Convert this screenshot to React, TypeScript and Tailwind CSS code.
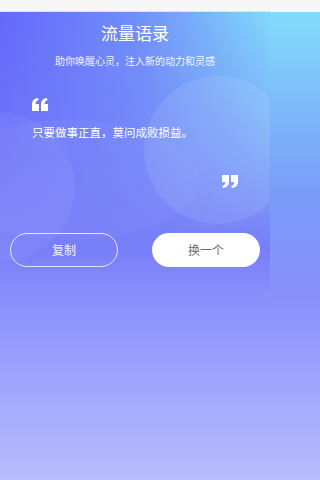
import React from "react";

const QuoteMark = ({ flip = false }: { flip?: boolean }) => (
  <svg
    width="16"
    height="13"
    viewBox="0 0 16 13"
    className={flip ? "rotate-180" : ""}
    fill="white"
  >
    <path d="M0 13 V6.5 C0 2.8 2.2 0.6 6 0 L6.6 2 C4.5 2.6 3.6 3.9 3.6 6 H7 V13 Z" />
    <path d="M9 13 V6.5 C9 2.8 11.2 0.6 15 0 L15.6 2 C13.5 2.6 12.6 3.9 12.6 6 H16 V13 Z" />
  </svg>
);

export default function App() {
  return (
    <div className="w-full h-[480px] bg-[linear-gradient(180deg,#f7f7f7_0px,#f7f7f7_12px,#82dcfb_12px,#7a9cf8_40%,#8a90fb_62%,#b8bcfd_100%)]">
      <div
        className="relative w-[270px] h-[480px] overflow-hidden bg-[linear-gradient(180deg,rgba(122,127,248,0)_0%,rgba(122,127,248,0.5)_30%,#787ef8_52%,#8a90fb_62%,#b8bcfd_100%),linear-gradient(90deg,#6467fb_0%,#6f8ffa_50%,#82dcfb_100%)]"
        style={{ fontFamily: '"Noto Sans CJK SC", "Noto Sans", sans-serif' }}
      >
        {/* decorative circles */}
        <div className="absolute left-[144px] top-[76px] w-[148px] h-[148px] rounded-full bg-white/[0.09]" />
        <div className="absolute -left-[75px] top-[112px] w-[150px] h-[150px] rounded-full bg-white/[0.05]" />
        <div className="absolute -left-[60px] top-[120px] w-[260px] h-[120px] rounded-[50%] bg-white/[0.03]" />

        <div className="relative flex flex-col">
          <div className="h-[12px] bg-[#f7f7f7] border-b border-[#dfe3f5]" />

          <h1 className="pt-[9px] text-center text-[17px] leading-[24px] text-white font-normal">
            流量语录
          </h1>
          <p className="mt-[9px] text-center text-[10px] leading-[14px] text-white/90">
            助你唤醒心灵，注入新的动力和灵感
          </p>

          <div className="mt-[30px] px-[32px] flex flex-col">
            <QuoteMark />
            <p className="mt-[13px] text-[11.5px] leading-[16px] text-white">
              只要做事正直，莫问成败损益。
            </p>
            <div className="mt-[35px] self-end">
              <QuoteMark flip />
            </div>
          </div>

          <div className="mt-[45px] px-[10px] flex justify-between">
            <button className="w-[108px] h-[34px] rounded-full border border-white/80 text-[12px] text-white/90">
              复制
            </button>
            <button className="w-[108px] h-[34px] rounded-full bg-white text-[12px] text-[#6f6f78]">
              换一个
            </button>
          </div>
        </div>
      </div>
    </div>
  );
}
